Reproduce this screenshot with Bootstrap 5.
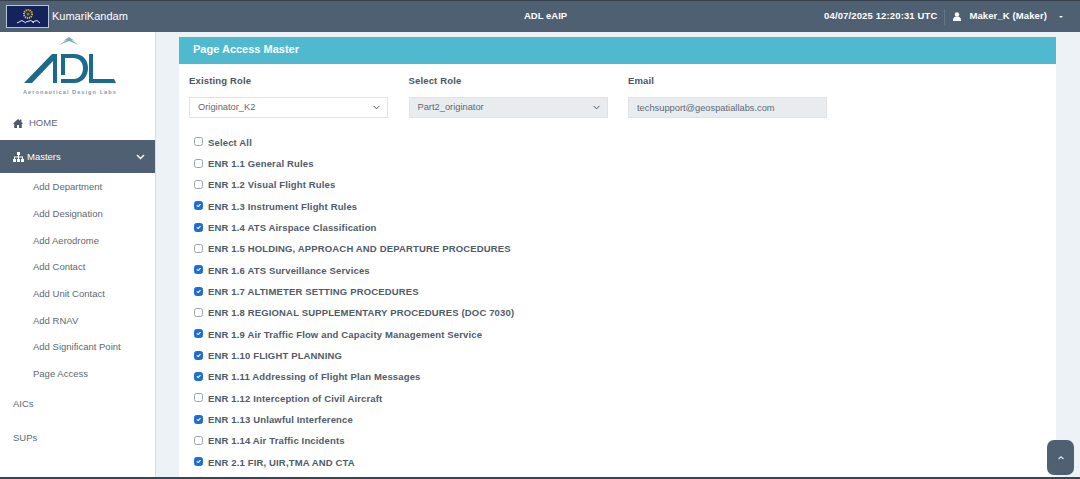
<!DOCTYPE html>
<html lang="en">
<head>
  <meta charset="UTF-8">
  <meta name="viewport" content="width=device-width, initial-scale=1.0">
  <title>Page Access Master</title>
  <link href="https://cdn.jsdelivr.net/npm/bootstrap@5.3.0/dist/css/bootstrap.min.css" rel="stylesheet">
  <style>
    html, body { height: 479px; overflow: hidden; }
    body { font-family: "Liberation Sans", Arial, sans-serif; background: #edf2f6; color: #4b5563; font-size: 10px; }
    .shell { height: 477px; overflow: hidden; }
    .bottom-line { height: 2px; background: #3c4650; }
    .topbar { height: 32px; background: #4f6072; border-top: 1px solid #36404b; color: #fff; padding: 0 17px 0 6px; }
    .flag { width: 43px; height: 23px; background: #14235c; border: 1px solid #b9c6d2; }
    .brand { font-size: 11px; margin-left: 3px; width: 472px; }
    .title, .clock, .user { font-weight: 700; font-size: 9.5px; }
    .title { width: 290px; }
    .clock { letter-spacing: .13px; }
    .user { letter-spacing: .1px; }
    .divider { width: 1px; height: 16px; background: #64758a; margin: 0 8px 0 7px; }
    .caret-mark { width: 0; height: 0; border: 2.5px solid transparent; border-top-color: #fff; border-bottom: 0; margin-left: 12px; }
    .sidebar { width: 156px; background: #fff; border-right: 1px solid #d5dde4; flex: none; }
    .logo-box { height: 78px; padding: 5px 0 0 22px; }
    .side-link { color: #5d6875; font-size: 9.5px; display: flex; align-items: center; text-decoration: none; }
    .side-home { height: 30px; padding: 0 0 4px 13px; gap: 6px; }
    .side-active { height: 33px; background: #4f6072; color: #fff; padding: 1px 10px 0 13px; gap: 3px; }
    .side-sub { height: 26.7px; padding-left: 33px; }
    .sublist { padding-top: 1px; }
    .side-plain { height: 34px; padding-left: 13px; }
    .main { padding: 5px 24px 0 23px; min-width: 0; }
    .panel { background: #fff; }
    .panel-head { height: 27px; background: #4fb9d0; color: #fff; font-weight: 700; font-size: 11px; padding: 0 0 2px 14px; }
    .panel-body { padding: 11px 10px 0 10px; }
    .role-col { width: 199px; margin-right: 20.5px; }
    .role-label { font-weight: 700; font-size: 9.5px; color: #4b5563; margin: 0 0 10px; letter-spacing: .15px; line-height: 12px; }
    .role-input { height: 21px; font-size: 9.3px; padding: 0 8px; border-radius: 0; border-color: #dfe3e8; color: #5d6875; background-position: right 6px center; background-size: 9px 7px; line-height: 19px; }
    .role-input:disabled, .role-input[readonly] { background-color: #e9ecef; color: #5d6875; }
    .checks { margin-top: 14px; }
    .check-row { height: 21.35px; padding-left: 5px; gap: 5px; }
    .check-row input { width: 9px; height: 9px; margin: 0; border-radius: 2px; border-color: #9aa3ad; flex: none; position: relative; top: -1px; }
    .check-row input:checked { background-color: #1f6fd1; border-color: #1f6fd1; background-size: 100% 100%; }
    .check-row label { font-weight: 700; font-size: 9.5px; color: #4f5b69; letter-spacing: .15px; }
    .to-top { position: fixed; left: 1047px; top: 440px; width: 27px; height: 35px; background: #4f6072; border-radius: 7px; border: 0; padding: 0; }
  </style>
</head>
<body>
<div class="shell d-flex flex-column">
  <header class="topbar d-flex align-items-center flex-shrink-0">
    <div class="flag d-flex align-items-center justify-content-center flex-shrink-0">
      <svg width="30" height="18" viewBox="0 0 30 18">
        <circle cx="15" cy="6" r="4" fill="none" stroke="#d9b949" stroke-width="2" stroke-dasharray="1.2 .8"/>
        <circle cx="15" cy="6" r="1.6" fill="#8c7a33"/>
        <path d="M4 15 L9 12.5 L13 15 M13 14 L18 12.5 L21 15 M19 14 L24 12.5 L27 15" fill="none" stroke="#e6e8ee" stroke-width="1"/>
      </svg>
    </div>
    <div class="brand">KumariKandam</div>
    <div class="title">ADL eAIP</div>
    <div class="clock ms-auto">04/07/2025 12:20:31 UTC</div>
    <div class="divider"></div>
    <svg width="8" height="9" viewBox="0 0 8 9" class="me-2"><circle cx="4" cy="2.4" r="2.2" fill="#fff"/><path d="M0 9 C0 5.5 1.5 4.6 4 4.6 C6.5 4.6 8 5.5 8 9 Z" fill="#fff"/></svg>
    <div class="user">Maker_K (Maker)</div>
    <div class="caret-mark"></div>
  </header>
  <div class="d-flex flex-grow-1" style="min-height:0">
    <aside class="sidebar">
      <div class="logo-box">
        <svg width="96" height="64" viewBox="0 0 96 64">
          <path d="M41 4 L47 0 L53 4 L47 2 Z M37 8 L47 1.5 L57 8 L47 4 Z" fill="#7ea7bd"/>
          <path d="M2 46 L30 17 L35 17 L35 46 L31 46 L31 24 L10 46 Z" fill="#1c6a8c"/>
          <path d="M39 17 L52 17 C62 17 66 24 66 31 C66 39 61 46 52 46 L39 46 L39 42 L51 42 C58 42 61 37 61 31 C61 25 57 21 51 21 L43 21 L43 38 L39 38 Z" fill="#1c6a8c"/>
          <path d="M67 17 L71 17 L71 42 L92 42 L94 46 L67 46 Z" fill="#1c6a8c"/>
          <text x="1" y="57" font-family="Liberation Sans" font-size="5.6" font-weight="700" letter-spacing="1.05" fill="#7f9db0">Aeronautical Design Labs</text>
        </svg>
      </div>
      <a class="side-link side-home" href="#">
        <svg width="10" height="9" viewBox="0 0 10 9"><path d="M5 0 L7 1.8 L7 .6 L8.4 .6 L8.4 3.1 L10 4.5 L8.8 5 L8.8 9 L6 9 L6 6 L4 6 L4 9 L1.2 9 L1.2 5 L0 4.5 Z" fill="#4f5b69"/></svg>
        HOME
      </a>
      <a class="side-link side-active" href="#">
        <svg width="11" height="10" viewBox="0 0 11 10"><path d="M4 0 H7 V3 H6 V4.5 H10 V7 H11 V10 H8 V7 H9 V5.5 H6 V7 H7 V10 H4 V7 H5 V5.5 H2 V7 H3 V10 H0 V7 H1 V4.5 H5 V3 H4 Z" fill="#fff"/></svg>
        <span>Masters</span>
        <svg class="ms-auto" width="9" height="6" viewBox="0 0 9 6"><path d="M1 1 L4.5 4.5 L8 1" fill="none" stroke="#fff" stroke-width="1.4"/></svg>
      </a>
      <nav class="sublist">
        <a class="side-link side-sub" href="#">Add Department</a>
        <a class="side-link side-sub" href="#">Add Designation</a>
        <a class="side-link side-sub" href="#">Add Aerodrome</a>
        <a class="side-link side-sub" href="#">Add Contact</a>
        <a class="side-link side-sub" href="#">Add Unit Contact</a>
        <a class="side-link side-sub" href="#">Add RNAV</a>
        <a class="side-link side-sub" href="#">Add Significant Point</a>
        <a class="side-link side-sub" href="#">Page Access</a>
      </nav>
      <a class="side-link side-plain" href="#">AICs</a>
      <a class="side-link side-plain" href="#">SUPs</a>
    </aside>
    <main class="main flex-grow-1 d-flex flex-column">
      <section class="panel flex-grow-1">
        <div class="panel-head d-flex align-items-center">Page Access Master</div>
        <div class="panel-body">
          <div class="d-flex">
            <div class="role-col">
              <div class="role-label">Existing Role</div>
              <select class="form-select role-input"><option>Originator_K2</option></select>
            </div>
            <div class="role-col">
              <div class="role-label">Select Role</div>
              <select class="form-select role-input" disabled><option>Part2_originator</option></select>
            </div>
            <div class="role-col">
              <div class="role-label">Email</div>
              <input class="form-control role-input" readonly value="techsupport@geospatiallabs.com">
            </div>
          </div>
          <div class="checks" id="checks"></div>
        </div>
      </section>
    </main>
  </div>
</div>
<div class="bottom-line"></div>
<button class="to-top" type="button" aria-label="Back to top">
  <svg width="8" height="6" viewBox="0 0 8 6"><path d="M1.5 4 L4 1.8 L6.5 4" fill="none" stroke="#dfe6ec" stroke-width="1.1"/></svg>
</button>
<script>
  const pages = [
    ['Select All', 0],
    ['ENR 1.1 General Rules', 0],
    ['ENR 1.2 Visual Flight Rules', 0],
    ['ENR 1.3 Instrument Flight Rules', 1],
    ['ENR 1.4 ATS Airspace Classification', 1],
    ['ENR 1.5 HOLDING, APPROACH AND DEPARTURE PROCEDURES', 0],
    ['ENR 1.6 ATS Surveillance Services', 1],
    ['ENR 1.7 ALTIMETER SETTING PROCEDURES', 1],
    ['ENR 1.8 REGIONAL SUPPLEMENTARY PROCEDURES (DOC 7030)', 0],
    ['ENR 1.9 Air Traffic Flow and Capacity Management Service', 1],
    ['ENR 1.10 FLIGHT PLANNING', 1],
    ['ENR 1.11 Addressing of Flight Plan Messages', 1],
    ['ENR 1.12 Interception of Civil Aircraft', 0],
    ['ENR 1.13 Unlawful Interference', 1],
    ['ENR 1.14 Air Traffic Incidents', 0],
    ['ENR 2.1 FIR, UIR,TMA AND CTA', 1]
  ];
  const box = document.getElementById('checks');
  pages.forEach((p, i) => {
    box.innerHTML += `<div class="check-row d-flex align-items-center"><input class="form-check-input" type="checkbox" id="pg${i}" ${p[1] ? 'checked' : ''}><label for="pg${i}">${p[0]}</label></div>`;
  });
</script>
</body>
</html>
